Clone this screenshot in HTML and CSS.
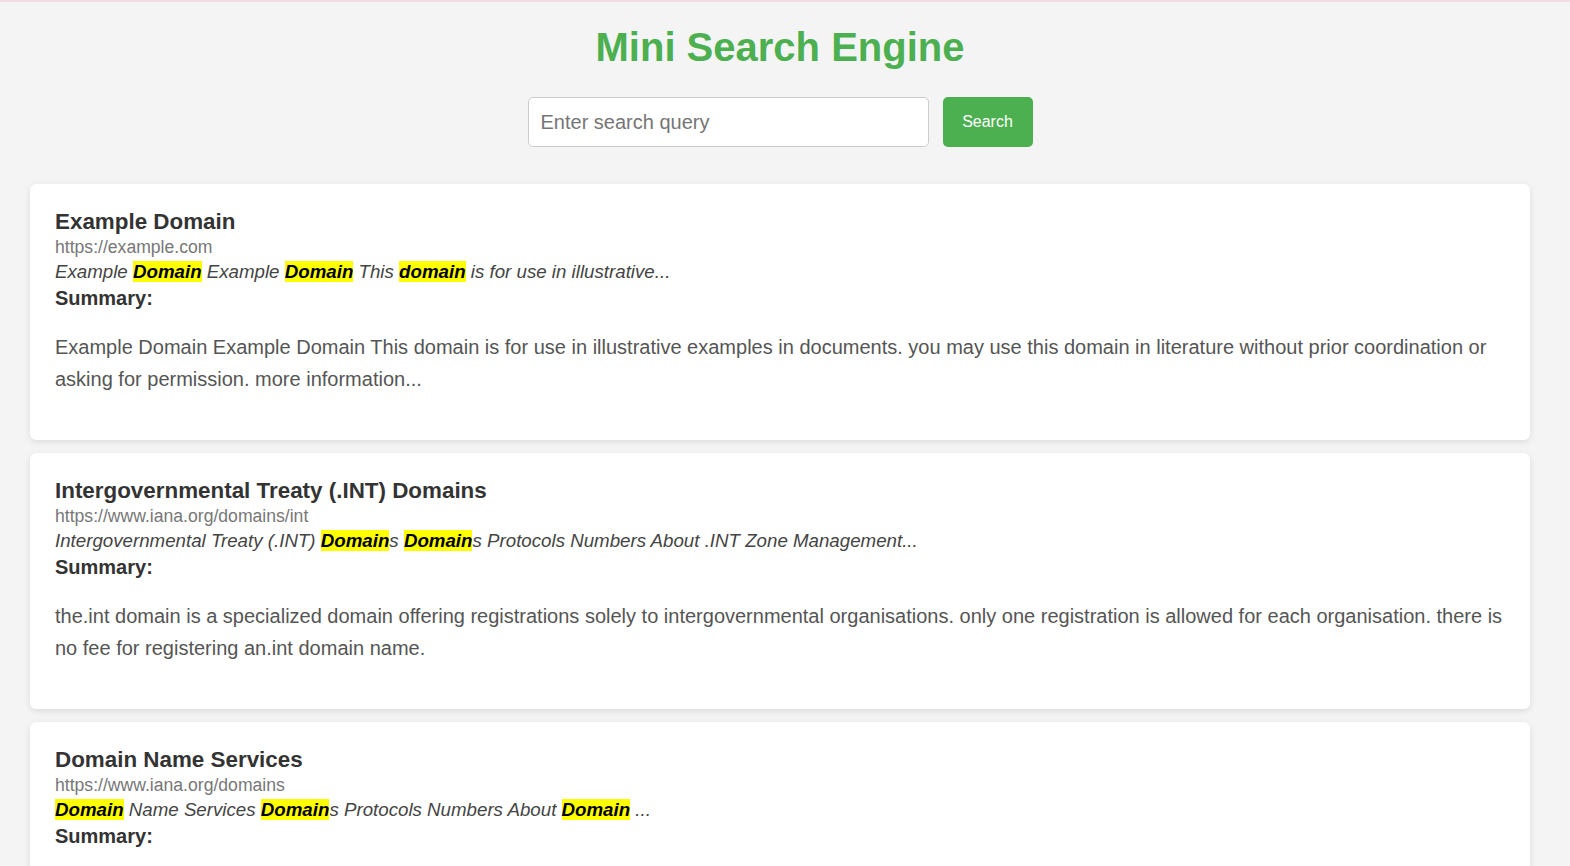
FILE: index.html
```html
<!DOCTYPE html>
<html lang="en">
<head>
<meta charset="utf-8">
<title>Mini Search Engine</title>
<link rel="stylesheet" href="styles.css">
</head>
<body>
<h1 class="page-title">Mini Search Engine</h1>
<form class="search-form">
  <input class="search-input" type="text" placeholder="Enter search query">
  <button class="search-button" type="button">Search</button>
</form>
<div class="results">
  <div class="result">
    <h3 class="result-title">Example Domain</h3>
    <div class="result-url">https://example.com</div>
    <div class="result-snippet">Example <mark>Domain</mark> Example <mark>Domain</mark> This <mark>domain</mark> is for use in illustrative...</div>
    <div class="result-label">Summary:</div>
    <p class="result-summary">Example Domain Example Domain This domain is for use in illustrative examples in documents. you may use this domain in literature without prior coordination or asking for permission. more information...</p>
  </div>
  <div class="result">
    <h3 class="result-title">Intergovernmental Treaty (.INT) Domains</h3>
    <div class="result-url">https://www.iana.org/domains/int</div>
    <div class="result-snippet">Intergovernmental Treaty (.INT) <mark>Domain</mark>s <mark>Domain</mark>s Protocols Numbers About .INT Zone Management...</div>
    <div class="result-label">Summary:</div>
    <p class="result-summary">the.int domain is a specialized domain offering registrations solely to intergovernmental organisations. only one registration is allowed for each organisation. there is no fee for registering an.int domain name.</p>
  </div>
  <div class="result">
    <h3 class="result-title">Domain Name Services</h3>
    <div class="result-url">https://www.iana.org/domains</div>
    <div class="result-snippet"><mark>Domain</mark> Name Services <mark>Domain</mark>s Protocols Numbers About <mark>Domain</mark> ...</div>
    <div class="result-label">Summary:</div>
    <p class="result-summary">The Domain Name System (DNS) root zone, .int and .arpa domains, and the IDN practices repository are managed here. more information...</p>
  </div>
</div>
</body>
</html>
```

FILE: styles.css
```css
html, body {
  margin: 0;
}
body {
  background: #f4f4f4;
  border-top: 2px solid #f3dbe3;
  font-family: "Liberation Sans", Arial, sans-serif;
  color: #333;
  padding: 0 40px 40px 30px;
}
.page-title {
  margin: 22px 0 0;
  text-align: center;
  color: #4caf50;
  font-size: 40px;
  line-height: 46px;
  font-weight: bold;
}
.search-form {
  display: flex;
  justify-content: center;
  gap: 14px;
  margin-top: 27px;
}
.search-input {
  box-sizing: border-box;
  width: 401px;
  height: 50px;
  padding: 0 12px;
  border: 1px solid #ccc;
  border-radius: 5px;
  font-family: "Liberation Sans", Arial, sans-serif;
  font-size: 20px;
  color: #333;
  background: #fff;
  outline: none;
}
.search-input::placeholder {
  color: #757575;
}
.search-button {
  box-sizing: border-box;
  width: 90px;
  height: 50px;
  border: none;
  border-radius: 5px;
  background: #4caf50;
  color: #fff;
  font-family: "Liberation Sans", Arial, sans-serif;
  font-size: 16px;
  cursor: pointer;
}
.results {
  margin-top: 37px;
  display: flex;
  flex-direction: column;
  gap: 13px;
}
.result {
  background: #fff;
  border-radius: 6px;
  box-shadow: 0 2px 6px rgba(0, 0, 0, 0.1);
  padding: 25px;
}
.result-title {
  margin: 0;
  font-size: 22.4px;
  line-height: 26px;
  font-weight: bold;
  color: #333;
}
.result-url {
  font-size: 17.6px;
  line-height: 24px;
  color: #777;
}
.result-snippet {
  font-size: 18.72px;
  line-height: 26px;
  font-style: italic;
  color: #444;
}
.result-snippet mark {
  background: #ffff00;
  color: #000;
  font-weight: bold;
}
.result-label {
  font-size: 20px;
  line-height: 26px;
  font-weight: bold;
  color: #333;
}
.result-summary {
  margin: 20px 0;
  font-size: 20px;
  line-height: 32px;
  color: #555;
}
```
